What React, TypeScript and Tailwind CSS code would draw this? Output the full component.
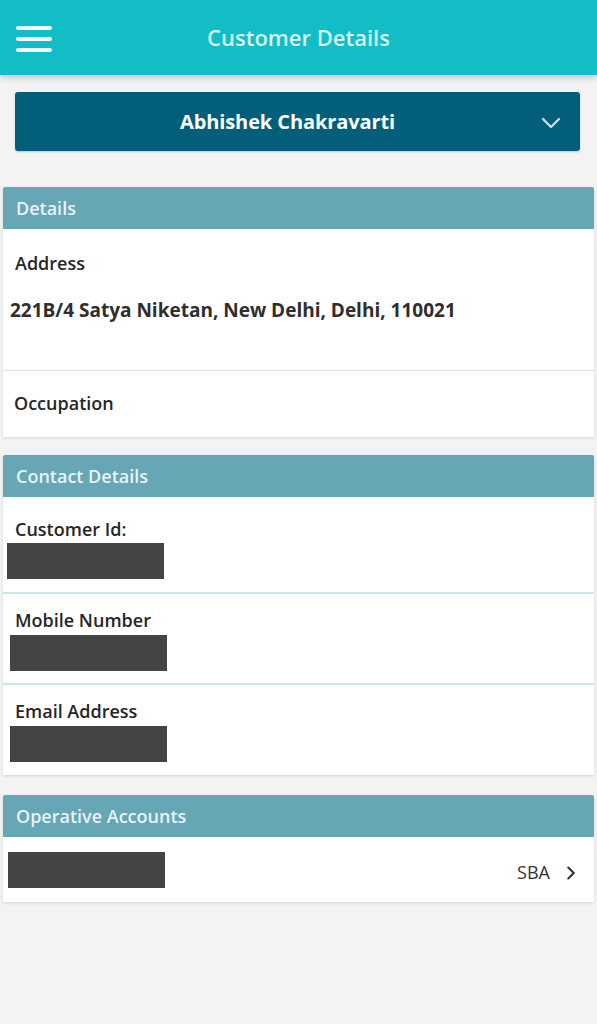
import { ChevronDown, ChevronRight } from 'lucide-react'

const sans = { fontFamily: '"Open Sans", "Liberation Sans", sans-serif' }

function SectionHeader({ title }: { title: string }) {
  return (
    <div className="h-[42px] bg-[#67a6b5] flex items-center px-[13px] rounded-t-[2px]">
      <span className="text-[18px] font-semibold text-[#e6f4f6]">{title}</span>
    </div>
  )
}

function Redacted({ ml = 'ml-[7px]' }: { ml?: string }) {
  return <div className={`${ml} w-[157px] h-[36px] bg-[#444444]`} />
}

export default function App() {
  return (
    <div className="w-[597px] h-[1024px] bg-[#f3f3f3] overflow-hidden" style={sans}>
      {/* Top bar */}
      <div className="relative h-[75px] bg-[#12bdc6] flex items-center justify-center shadow-[0_3px_6px_rgba(0,0,0,0.18)]">
        <div className="absolute left-[16px] top-[26px] flex flex-col gap-[7px]">
          <div className="w-[36px] h-[4px] rounded-full bg-[#f2fbfc]" />
          <div className="w-[36px] h-[4px] rounded-full bg-[#f2fbfc]" />
          <div className="w-[36px] h-[4px] rounded-full bg-[#f2fbfc]" />
        </div>
        <span className="text-[22px] font-semibold text-[#d9f4f6]">Customer Details</span>
      </div>

      {/* Customer selector */}
      <div className="pt-[17px] pl-[15px] pr-[17px]">
        <div className="relative h-[59px] rounded-[3px] bg-[#035e79] flex items-center justify-center pr-[20px] shadow-[0_1px_2px_rgba(0,0,0,0.2)]">
          <span className="text-[20px] font-bold text-white tracking-[-0.1px]">Abhishek Chakravarti</span>
          <ChevronDown className="absolute right-[13px] top-[15px] text-[#bfe0e8]" size={32} strokeWidth={1.8} />
        </div>
      </div>

      <div className="px-[3px] pt-[36px] flex flex-col">
        {/* Details */}
        <div className="shadow-[0_1px_3px_rgba(0,0,0,0.12)]">
          <SectionHeader title="Details" />
          <div className="bg-white">
            <div className="h-[142px] border-b border-[#e2e2e2] pt-[22px]">
              <div className="pl-[12px] text-[18px] font-semibold text-[#262626] leading-[24px]">Address</div>
              <div className="pl-[7px] mt-[22px] text-[19px] font-bold text-[#2e2e2e] leading-[26px]">
                221B/4 Satya Niketan, New Delhi, Delhi, 110021
              </div>
            </div>
            <div className="h-[66px] pt-[20px] pl-[11px] text-[18px] font-semibold text-[#262626] leading-[24px]">Occupation</div>
          </div>
        </div>

        {/* Contact Details */}
        <div className="mt-[18px] shadow-[0_1px_3px_rgba(0,0,0,0.12)]">
          <SectionHeader title="Contact Details" />
          <div className="bg-white">
            <div className="h-[97px] border-b-2 border-[#c6e8ea] pt-[21px]">
              <div className="pl-[12px] text-[18px] font-semibold text-[#262626] leading-[22px]">Customer Id:</div>
              <div className="mt-[3px]">
                <Redacted ml="ml-[4px]" />
              </div>
            </div>
            <div className="h-[91px] border-b-2 border-[#c6e8ea] pt-[15px]">
              <div className="pl-[12px] text-[18px] font-semibold text-[#262626] leading-[22px]">Mobile Number</div>
              <div className="mt-[4px]">
                <Redacted />
              </div>
            </div>
            <div className="h-[90px] pt-[15px]">
              <div className="pl-[12px] text-[18px] font-semibold text-[#262626] leading-[22px]">Email Address</div>
              <div className="mt-[4px]">
                <Redacted />
              </div>
            </div>
          </div>
        </div>

        {/* Operative Accounts */}
        <div className="mt-[20px] shadow-[0_1px_3px_rgba(0,0,0,0.12)]">
          <SectionHeader title="Operative Accounts" />
          <div className="bg-white h-[65px] pt-[15px] flex items-start justify-between pr-[12px]">
            <Redacted ml="ml-[5px]" />
            <div className="flex items-center gap-[10px] mt-[7px] text-[#333]">
              <span className="text-[18px]">SBA</span>
              <ChevronRight size={22} strokeWidth={2.3} />
            </div>
          </div>
        </div>
      </div>
    </div>
  )
}
